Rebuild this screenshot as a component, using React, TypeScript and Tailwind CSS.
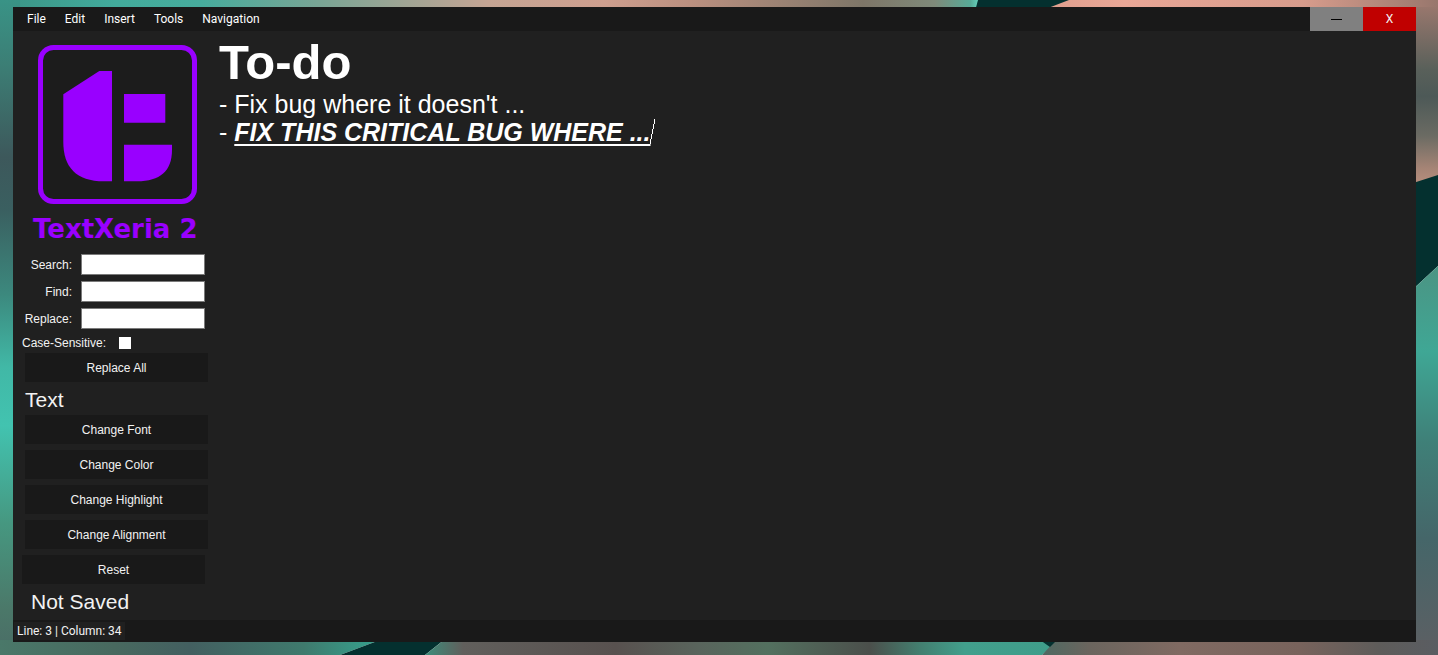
import React from "react";

const menus = ["File", "Edit", "Insert", "Tools", "Navigation"];
const fields = ["Search", "Find", "Replace"];
const textActions = ["Change Font", "Change Color", "Change Highlight", "Change Alignment"];

function Wallpaper() {
  return (
    <svg
      aria-hidden="true"
      className="absolute inset-0 -z-10 h-full w-full"
      viewBox="0 0 1438 655"
      preserveAspectRatio="none"
    >
      <defs>
        <linearGradient id="wp-top" x1="0" x2="1">
          <stop offset="0" stopColor="#3b9486" />
          <stop offset="0.08" stopColor="#42ab9c" />
          <stop offset="0.14" stopColor="#47ac9d" />
          <stop offset="0.22" stopColor="#78a595" />
          <stop offset="0.34" stopColor="#c5a594" />
          <stop offset="0.42" stopColor="#ce9f8f" />
          <stop offset="0.48" stopColor="#bb9080" />
          <stop offset="0.6" stopColor="#7e7668" />
          <stop offset="0.65" stopColor="#7f8a7a" />
          <stop offset="0.675" stopColor="#57ab98" />
          <stop offset="0.68" stopColor="#64cfba" />
        </linearGradient>
        <linearGradient id="wp-left" x1="0" x2="0" y1="0" y2="1">
          <stop offset="0" stopColor="#399386" />
          <stop offset="0.1" stopColor="#3c7e75" />
          <stop offset="0.24" stopColor="#3d585b" />
          <stop offset="0.32" stopColor="#3a5f60" />
          <stop offset="0.45" stopColor="#3c897e" />
          <stop offset="0.56" stopColor="#41b8a6" />
          <stop offset="0.65" stopColor="#42c3b0" />
          <stop offset="0.8" stopColor="#469780" />
          <stop offset="0.93" stopColor="#4b7869" />
          <stop offset="1" stopColor="#4a6c66" />
        </linearGradient>
        <linearGradient id="wp-pink" x1="0" x2="1">
          <stop offset="0" stopColor="#d99a88" />
          <stop offset="0.3" stopColor="#e9a797" />
          <stop offset="0.7" stopColor="#d79c8c" />
          <stop offset="1" stopColor="#98776d" />
        </linearGradient>
        <linearGradient id="wp-right" x1="0" x2="0" y1="0" y2="1">
          <stop offset="0" stopColor="#98776d" />
          <stop offset="0.35" stopColor="#59605a" />
          <stop offset="0.5" stopColor="#4d5957" />
          <stop offset="0.72" stopColor="#6b6b63" />
          <stop offset="0.9" stopColor="#a58475" />
          <stop offset="1" stopColor="#b98f7e" />
        </linearGradient>
        <linearGradient id="wp-right-low" x1="0" x2="0" y1="0" y2="1">
          <stop offset="0" stopColor="#4b9483" />
          <stop offset="0.22" stopColor="#3fa795" />
          <stop offset="0.45" stopColor="#3f8078" />
          <stop offset="0.7" stopColor="#456669" />
          <stop offset="1" stopColor="#5d5f63" />
        </linearGradient>
        <linearGradient id="wp-bottom-left" x1="0" x2="1">
          <stop offset="0" stopColor="#4a7869" />
          <stop offset="0.3" stopColor="#48695f" />
          <stop offset="0.5" stopColor="#435f60" />
          <stop offset="0.8" stopColor="#3f7a6d" />
          <stop offset="1" stopColor="#35a38f" />
        </linearGradient>
        <linearGradient id="wp-bottom-mid" x1="0" x2="1">
          <stop offset="0" stopColor="#3d8d7b" />
          <stop offset="0.06" stopColor="#615f5c" />
          <stop offset="0.3" stopColor="#58514f" />
          <stop offset="0.43" stopColor="#59645c" />
          <stop offset="0.54" stopColor="#53705f" />
          <stop offset="0.7" stopColor="#4b4f4b" />
          <stop offset="0.78" stopColor="#437f70" />
          <stop offset="0.85" stopColor="#429f8c" />
          <stop offset="1" stopColor="#3f9d8a" />
        </linearGradient>
        <linearGradient id="wp-bottom-right" x1="0" x2="1">
          <stop offset="0" stopColor="#4f6962" />
          <stop offset="0.12" stopColor="#6b655e" />
          <stop offset="0.35" stopColor="#806a62" />
          <stop offset="0.65" stopColor="#78635c" />
          <stop offset="0.85" stopColor="#5e5c5a" />
          <stop offset="1" stopColor="#5a5d62" />
        </linearGradient>
      </defs>
      <rect width="1438" height="40" fill="url(#wp-top)" />
      <rect width="20" height="655" fill="url(#wp-left)" />
      <path d="M978 0H1438V30H970Z" fill="#04302f" />
      <path d="M1069 0H1438V30H990Z" fill="url(#wp-pink)" />
      <path d="M1410 7H1438V176L1410 186Z" fill="url(#wp-right)" />
      <path d="M1410 184L1438 175V266L1410 292Z" fill="#04302f" />
      <path d="M1410 292L1438 266V655H1410Z" fill="url(#wp-right-low)" />
      <path d="M0 640H380L340 655H0Z" fill="url(#wp-bottom-left)" />
      <path d="M380 640H444L425 655H340Z" fill="#04302f" />
      <path d="M444 640H1060L1042 655H425Z" fill="url(#wp-bottom-mid)" />
      <path d="M1056 640H1438V655H1042Z" fill="url(#wp-bottom-right)" />
      <path d="M1040 640H1057L1050 647Z" fill="#04302f" />
    </svg>
  );
}

function Logo() {
  return (
    <svg role="img" aria-label="TextXeria logo" className="ml-[25px] h-[159px] w-[159px]" viewBox="0 0 159 159">
      <rect x="2.5" y="2.5" width="154" height="154" rx="13" fill="#1c1c1c" stroke="#9900ff" strokeWidth="5" />
      <g fill="#9900ff">
        <path d="M25.3 49.3L61.3 26H74V136.3H66C38 136.3 25.3 122 25.3 97Z" />
        <path d="M86 49H127.3V77.7H86Z" />
        <path d="M86 99.7H134V105C134 126 122 136.3 99 136.3H86Z" />
      </g>
    </svg>
  );
}

function SideButton({ children }: { children: React.ReactNode }) {
  return (
    <button type="button" className="h-[29px] w-[183px] shrink-0 bg-[#191919] text-center hover:bg-[#2a2a2a]">
      {children}
    </button>
  );
}

export default function App() {
  return (
    <div className="relative isolate flex min-h-screen pt-[7px] pr-[22px] pb-[13px] pl-[13px] font-['Liberation_Sans',Arial,sans-serif] text-xs text-[#f2f2f2]">
      <Wallpaper />
      <div className="flex flex-1 flex-col bg-[#202020]">
        <header className="flex h-6 items-stretch justify-between bg-[#191919] font-['Roboto','Noto_Sans',sans-serif]">
          <nav className="flex items-center gap-[19px] pl-[14px] text-white">
            {menus.map((m) => (
              <button key={m} type="button">
                {m}
              </button>
            ))}
          </nav>
          <div className="flex">
            <button
              type="button"
              aria-label="Minimize"
              className="flex w-[53px] items-center justify-center bg-[#808080]"
            >
              <span className="h-px w-[11px] bg-black" />
            </button>
            <button type="button" aria-label="Close" className="w-[53px] bg-[#c00000]">
              X
            </button>
          </div>
        </header>

        <div className="flex flex-1">
          <aside className="flex w-[206px] shrink-0 flex-col pt-[14px]">
            <Logo />
            <h1 className="flex h-[50px] items-center pl-[20px] font-['DejaVu_Sans',sans-serif] text-[26px] font-bold whitespace-nowrap text-[#9900ff]">
              TextXeria 2
            </h1>
            <div className="flex flex-col gap-[6px]">
              {fields.map((f) => (
                <div key={f} className="flex h-[21px] items-center gap-[9px]">
                  <label htmlFor={f} className="w-[59px] text-right">
                    {f}:
                  </label>
                  <input
                    id={f}
                    type="text"
                    className="h-[21px] w-[124px] border border-[#7a7a7a] bg-white px-1 text-black outline-none"
                  />
                </div>
              ))}
            </div>
            <div className="mt-[3px] flex h-[21px] items-center pl-[9px]">
              <label htmlFor="case" className="w-[97px]">
                Case-Sensitive:
              </label>
              <input id="case" type="checkbox" className="h-3 w-3 appearance-none bg-white checked:bg-[#9900ff]" />
            </div>
            <div className="flex flex-col pl-3">
              <SideButton>Replace All</SideButton>
              <h2 className="flex h-[33px] items-center pt-[2px] text-[21px]">Text</h2>
              <div className="flex flex-col gap-[6px]">
                {textActions.map((a) => (
                  <SideButton key={a}>{a}</SideButton>
                ))}
              </div>
            </div>
            <div className="mt-[6px] flex pl-[9px]">
              <SideButton>Reset</SideButton>
            </div>
            <p className="flex h-9 items-center pl-[18px] text-[21px]">Not Saved</p>
          </aside>

          <main
            contentEditable
            suppressContentEditableWarning
            role="textbox"
            aria-multiline="true"
            aria-label="Document"
            spellCheck={false}
            className="flex-1 pt-[3px] text-[25px] leading-[28px] text-white caret-white outline-none"
          >
            <p className="text-[49px] leading-[56px] font-bold">To-do</p>
            <p>- Fix bug where it doesn't ...</p>
            <p>
              -{" "}
              <span className="font-bold italic underline decoration-2 underline-offset-[3px] [text-decoration-skip-ink:none]">
                FIX THIS CRITICAL BUG WHERE ...
              </span>
              <span className="relative inline-block" contentEditable={false}>
                <svg
                  aria-hidden="true"
                  className="absolute right-[-5px] -bottom-[6px] h-[28px] w-[7px]"
                  viewBox="0 0 7 28"
                  shapeRendering="crispEdges"
                >
                  <path d="M0.5 27.5L6 0.5" stroke="#fff" strokeWidth="1" />
                </svg>
              </span>
            </p>
          </main>
        </div>

        <footer className="flex h-[22px] items-center bg-[#191919] pl-px font-['Roboto','Noto_Sans',sans-serif]">
          <span className="bg-[#202020] px-[3px] leading-[18px]">Line: 3 | Column: 34</span>
        </footer>
      </div>
    </div>
  );
}
